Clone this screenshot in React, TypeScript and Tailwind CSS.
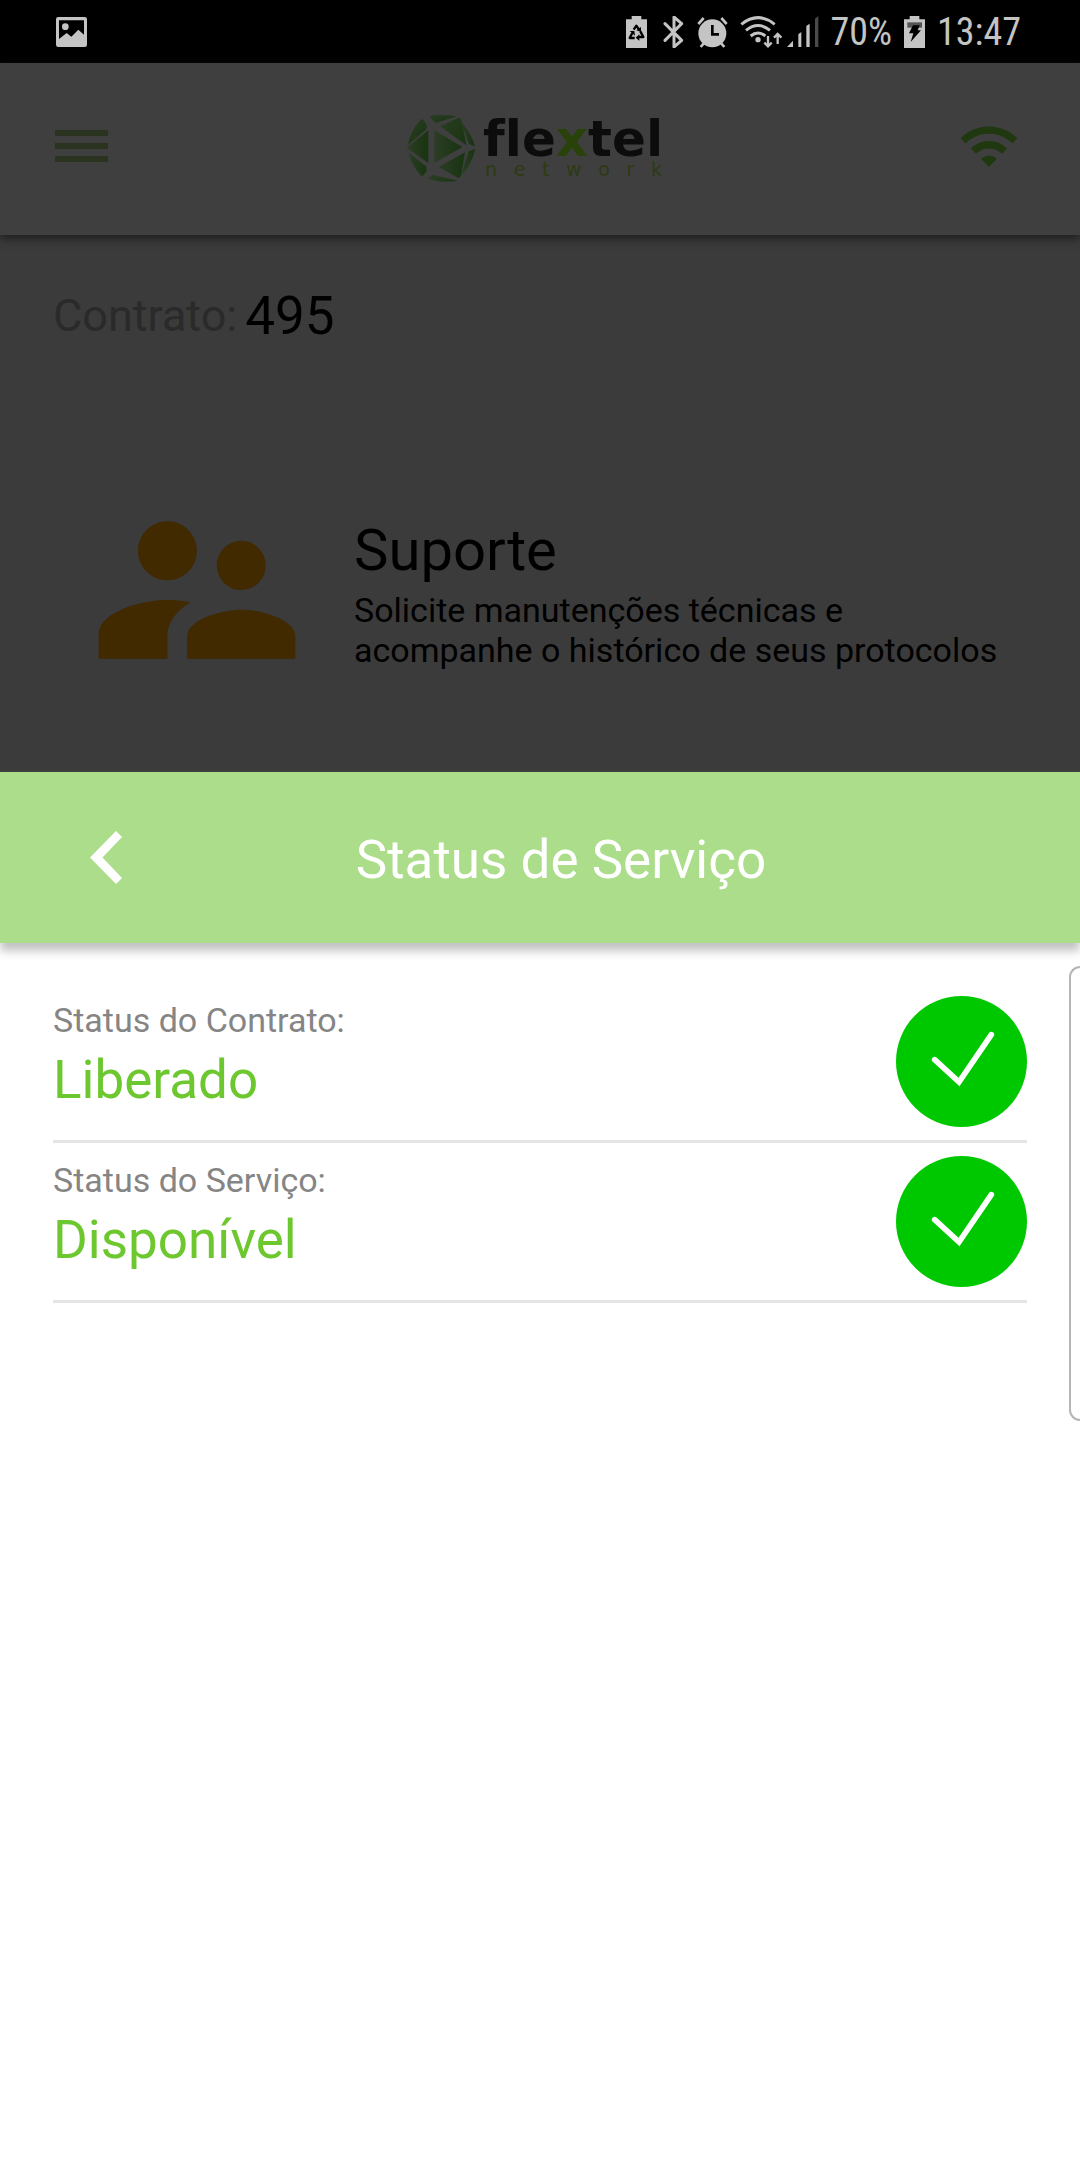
import type { ReactNode } from "react";
import { MdSupervisorAccount, MdWifi } from "react-icons/md";

// Service status rows
const statusItems = [
  { id: "contract", label: "Status do Contrato:", value: "Liberado" },
  { id: "service", label: "Status do Serviço:", value: "Disponível" },
];

function StatusIcon({ className, viewBox, children }: { className: string; viewBox: string; children: ReactNode }) {
  return (
    <svg className={className} viewBox={viewBox} fill="currentColor" aria-hidden="true">
      {children}
    </svg>
  );
}

function StatusBar() {
  return (
    <div className="flex h-[63px] items-center justify-between bg-black pl-14 pr-[59px] text-[#c4c4c4]">
      {/* Picture notification */}
      <StatusIcon className="h-[30px] w-[31px]" viewBox="0 0 93 90">
        <path
          fillRule="evenodd"
          d="M7 0h79q7 0 7 7v76q0 7-7 7H7q-7 0-7-7V7q0-7 7-7zM9 10v56l23-18 14 11 21-21 17 15V10z"
        />
        <circle cx="28" cy="29" r="10" />
      </StatusIcon>

      <div className="flex items-center">
        {/* Battery saver */}
        <StatusIcon className="mr-4 h-8 w-[21px]" viewBox="0 0 63 96">
          <path d="M17 0h29v10h17v86H0V10h17z" />
          <path
            d="M23 41l8-12 9 13M43 46l9 17h-13M26 66H11l8-15"
            fill="none"
            stroke="#000"
            strokeWidth="7"
            strokeLinejoin="round"
          />
          <path d="M45 33v15l-14-5zM40 55v19l-11-9zM11 45h14l2 14z" fill="#000" />
        </StatusIcon>
        {/* Bluetooth */}
        <StatusIcon className="mr-3 h-8 w-[22px]" viewBox="0 0 66 96">
          <path
            d="M6 23l50 50-23 20V3l23 20L6 73"
            fill="none"
            stroke="currentColor"
            strokeWidth="9"
            strokeLinejoin="round"
            strokeLinecap="round"
          />
        </StatusIcon>
        {/* Alarm */}
        <StatusIcon className="mr-3 h-8 w-[31px]" viewBox="0 0 93 96">
          <path d="M4 24L20 6M73 6l16 18M22 80L11 93M71 80l11 13" stroke="currentColor" strokeWidth="8" />
          <circle cx="46" cy="52" r="42" />
          <path d="M46 27v28h20" fill="none" stroke="#000" strokeWidth="8" />
        </StatusIcon>
        {/* Wi-Fi with traffic arrows */}
        <StatusIcon className="mr-1 h-8 w-[43px]" viewBox="0 0 129 96">
          <path
            d="M4 25Q54-15 104 25M18 43q36-29 72 0M32 60q22-18 44 0"
            fill="none"
            stroke="currentColor"
            strokeWidth="9"
          />
          <circle cx="54" cy="71" r="8" />
          <path
            d="M84 60v30M73 80l11 11 11-11M113 84V54M102 65l11-11 11 11"
            fill="none"
            stroke="currentColor"
            strokeWidth="7"
          />
        </StatusIcon>
        {/* Mobile signal */}
        <StatusIcon className="mr-3 h-8 w-8" viewBox="0 0 96 96">
          <path d="M0 93l18-19v19zM34 55l9-7v45h-9zM58 30l10-7v70H58z" />
          <path d="M84 8l10-8v93H84z" fill="#4a4a4a" />
        </StatusIcon>
        <span className="text-[38px] leading-[42px] font-['Roboto_Condensed','Roboto',sans-serif]">70%</span>
        {/* Charging battery */}
        <StatusIcon className="mx-3 h-8 w-[21px]" viewBox="0 0 63 96">
          <path d="M17 0h29v10h17v86H0V10h17z" />
          <path d="M10 19h44v16H10z" fill="#555" />
          <path d="M27 28h20l-6 15h10L20 78l8-26H15z" fill="#000" />
        </StatusIcon>
        <span className="text-[38px] leading-[42px] font-['Roboto_Condensed','Roboto',sans-serif]">13:47</span>
      </div>
    </div>
  );
}

function Logo() {
  return (
    <div className="flex items-center gap-[6px] pl-1 pt-[6px]" role="img" aria-label="flextel network">
      <svg className="h-[68px] w-[71px]" viewBox="0 0 213 204" aria-hidden="true">
        <defs>
          <linearGradient id="gem" x1="0" y1="0" x2="1" y2="1">
            <stop offset="0" stopColor="#2a3d24" />
            <stop offset="1" stopColor="#18340f" />
          </linearGradient>
          <linearGradient id="gemLight" x1="0" y1="0" x2="1" y2="0">
            <stop offset="0" stopColor="#2b3d26" />
            <stop offset="1" stopColor="#18340f" />
          </linearGradient>
        </defs>
        <g fill="url(#gem)">
          <path d="M46 12q12 4 17 24l-5 10L5 91q8-45 41-79z" />
          <path d="M102 34l56-26q7 0 10 12l13 71z" />
          <path d="M69 3q40-6 83 1L89 24z" />
          <path d="M164 18q35 42 43 76l-17-6z" />
        </g>
        <g fill="url(#gemLight)">
          <path d="M67 46v98L2 98z" />
          <path d="M85 46v98l84-48z" />
          <path d="M7 112l54 43 1 14-14 16q-31-31-41-73z" />
          <path d="M98 156l79-44-12 72-8 5z" />
          <path d="M66 191l14-11 75 17q-50 9-89-6z" />
          <path d="M188 109l20-8q-10 45-42 80z" />
        </g>
      </svg>
      <div className="w-[181px]">
        <div className="text-[50px] leading-10 font-bold font-['DejaVu_Sans',sans-serif] text-[#0c0c0c] [font-variant-ligatures:none]">
          fle<span className="text-[#294209]">x</span>tel
        </div>
        <div className="flex justify-between px-[2px] text-[19px] leading-5 font-['DejaVu_Sans',sans-serif] text-[#2d3a12]">
          {"network".split("").map((letter, index) => (
            <span key={index}>{letter}</span>
          ))}
        </div>
      </div>
    </div>
  );
}

function AppHeader() {
  return (
    <header className="flex h-[172px] items-center justify-between bg-[#3f3f3f] pb-[6px] pl-[55px] pr-[60px] shadow-[0_4px_8px_#1f1f1f]">
      <button type="button" aria-label="Menu" className="flex w-[53px] flex-col gap-[7px]">
        <span className="h-[6px] bg-[#29331f]"></span>
        <span className="h-[6px] bg-[#29331f]"></span>
        <span className="h-[6px] bg-[#29331f]"></span>
      </button>
      <Logo />
      <button type="button" aria-label="Wi-Fi">
        <MdWifi className="size-[62px] text-[#20380f]" />
      </button>
    </header>
  );
}

function CheckBadge() {
  return (
    <svg className="size-[131px] shrink-0" viewBox="0 0 393 393" aria-hidden="true">
      <circle cx="196.5" cy="196.5" r="196.5" fill="#00c800" />
      <path d="M116 191l73 67 97-142" fill="none" stroke="#fff" strokeWidth="17" strokeLinecap="round" />
    </svg>
  );
}

export default function App() {
  return (
    <div className="relative flex min-h-screen flex-col bg-[#3b3b3b] font-['Roboto',sans-serif]">
      <StatusBar />
      <AppHeader />

      <main className="pb-16">
        <p className="flex items-center gap-2 px-[53px] pt-[50px] leading-[62px]">
          <span className="text-[45px] text-[#2a2a2a]">Contrato:</span>
          <span className="text-[53px] text-black">495</span>
        </p>
        <a href="#suporte" className="mt-[125px] flex items-start pl-[79px] pr-12 text-black">
          <MdSupervisorAccount className="size-[236px] shrink-0 text-[#412900]" />
          <div className="pl-[39px] pt-11">
            <h2 className="text-[58px] leading-[68px]">Suporte</h2>
            <p className="mt-[6px] text-[34px] leading-10">
              Solicite manutenções técnicas e<br />
              acompanhe o histórico de seus protocolos
            </p>
          </div>
        </a>
      </main>

      {/* Bottom sheet */}
      <section className="flex-1 bg-white">
        <div className="flex h-[171px] items-center bg-[#acdd8a] pl-[90px] pr-20 text-white shadow-[0_8px_9px_#c2c2c2]">
          <button type="button" aria-label="Voltar">
            <svg className="h-[53px] w-8" viewBox="0 0 32 53" fill="currentColor" aria-hidden="true">
              <path d="M26 0l6 6-19.500 20.500L32 47l-6 6L0 26.500z" />
            </svg>
          </button>
          <h1 className="flex-1 pt-1 text-center text-[53px] leading-[62px]">Status de Serviço</h1>
        </div>
        <ul className="px-[53px] pt-10">
          {statusItems.map((item) => (
            <li key={item.id} className="flex items-start justify-between border-b-3 border-[#e5e5e5] py-[13px]">
              <div className="pt-1">
                <p className="text-[34px] leading-10 text-[#858585]">{item.label}</p>
                <p className="mt-[9px] text-[53px] leading-[62px] text-[#6dc72e]">{item.value}</p>
              </div>
              <CheckBadge />
            </li>
          ))}
        </ul>
      </section>

      {/* Edge panel handle */}
      <div className="absolute right-0 top-[966px] h-[455px] w-[11px] rounded-l-[14px] border-2 border-r-0 border-[#b5b5b5] bg-white"></div>
    </div>
  );
}
